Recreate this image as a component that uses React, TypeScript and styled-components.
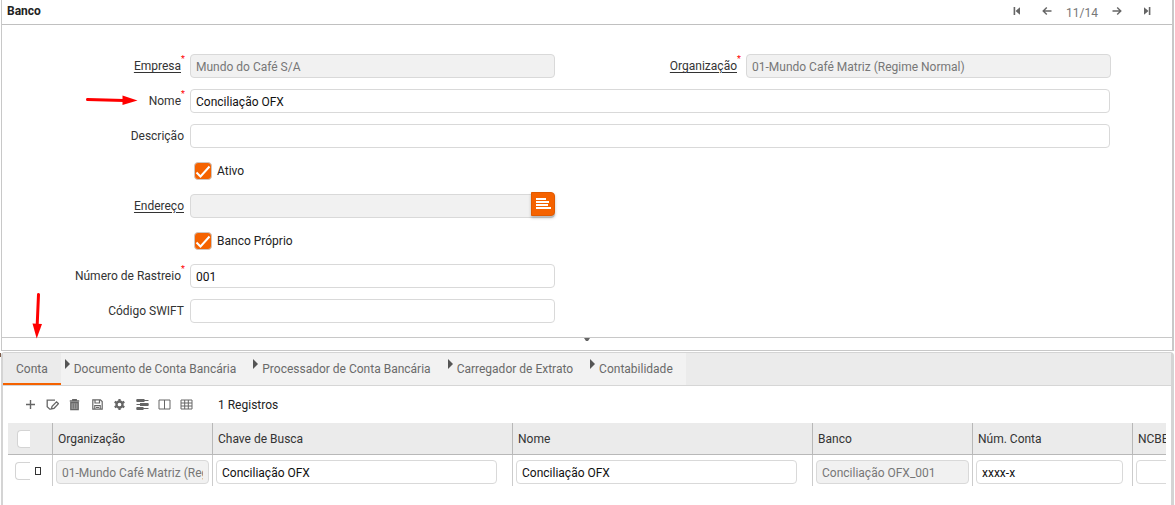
import React from 'react';
import styled, { createGlobalStyle } from 'styled-components';

const Global = createGlobalStyle`
  * { box-sizing: border-box; }
  body { margin: 0; background: #fff; }
  body, button, input { font-family: Roboto, "Open Sans", sans-serif; font-size: 12px; color: #333; }
`;

const Page = styled.div`
  position: relative;
  min-height: 100vh;
  padding: 0 1px;
  display: flex;
  flex-direction: column;
  overflow: hidden;
`;

const FormPanel = styled.section`
  border: solid #c8c8c8;
  border-width: 0 2px 1px 1px;
`;

const Header = styled.header`
  height: 25px;
  display: flex;
  align-items: center;
  justify-content: space-between;
  padding: 0 17px 3px 5px;
  border-bottom: 1px solid #c0c0c0;
`;

const Title = styled.h1`
  margin: 0;
  font-size: 12px;
  line-height: 20px;
  font-weight: 700;
  color: #222;
`;

const Pager = styled.nav`
  display: flex;
  align-items: center;
  gap: 14px;
`;

const PagerButton = styled.button`
  width: 16px;
  height: 16px;
  padding: 0;
  border: 0;
  background: none;
  color: #666;
  display: flex;
  align-items: center;
  justify-content: center;
`;

const PagerText = styled.span`
  margin: 0 -3px;
  padding-top: 5px;
  color: #777;
  line-height: 16px;
`;

const Form = styled.form`
  display: grid;
  grid-template-columns: 183px 1fr 181px 1fr;
  column-gap: 5px;
  row-gap: 11px;
  grid-auto-rows: 24px;
  align-items: center;
  padding: 29px 61px 14px 0;
`;

const Label = styled.label<{ $link?: boolean; $required?: boolean }>`
  justify-self: end;
  display: flex;
  padding-right: 1px;
  line-height: 16px;
  white-space: nowrap;
  span {
    text-decoration: ${p => (p.$link ? 'underline' : 'none')};
    text-underline-offset: 2px;
  }
  &::after {
    content: ${p => (p.$required ? '"*"' : 'none')};
    width: 3px;
    margin-top: -3px;
    color: #f00;
    font-size: 9px;
    line-height: 8px;
  }
`;

const Input = styled.input<{ $wide?: boolean; $trim?: number }>`
  grid-column: ${p => (p.$wide ? '2 / -1' : 'auto')};
  display: block;
  width: calc(100% - ${p => p.$trim ?? 0}px);
  min-width: 0;
  height: 24px;
  padding: 1px 5px 0;
  border: 1px solid #d9d9d9;
  border-radius: 4px;
  background: #fff;
  color: #111;
  outline: 0;
  &:disabled { background: #f1f1f1; color: #777; }
`;

const CheckLabel = styled.label`
  grid-column: 2 / -1;
  display: flex;
  align-items: center;
  gap: 5px;
  padding-left: 4px;
  line-height: 16px;
  color: #222;
`;

const Tick = styled.span`
  display: grid;
  width: 18px;
  height: 18px;
  > * { grid-area: 1 / 1; }
  svg { pointer-events: none; }
`;

const TickInput = styled.input`
  appearance: none;
  width: 18px;
  height: 18px;
  margin: 0;
  border: 1px solid #cfc5bf;
  border-radius: 4px;
  background: #fff;
  &:checked { background: #f56200; }
`;

const Lookup = styled.div`
  position: relative;
`;

const LookupButton = styled.button`
  position: absolute;
  top: -2px;
  right: 0;
  width: 24px;
  height: 24px;
  padding: 0;
  border: 1px solid #e05a00;
  border-radius: 0 4px 4px 0;
  background: #f56200;
  box-shadow: 0 2px 3px rgba(0, 0, 0, 0.25);
  display: flex;
  align-items: center;
  justify-content: center;
`;

const RowRest = styled.div`
  grid-column: span 2;
`;

const Splitter = styled.div`
  height: 13px;
  border: solid #c8c8c8;
  border-width: 0 2px 1px 1px;
  display: flex;
  justify-content: center;
  align-items: flex-start;
`;

const Detail = styled.section`
  flex: 1;
  margin-top: 1px;
  border: solid #d4d4d4;
  border-width: 1px 3px 0 2px;
  border-radius: 4px 4px 0 0;
`;

const Tabs = styled.div`
  height: 33px;
  display: flex;
  background: #ebebeb;
  border-bottom: 1px solid #d6d6d6;
`;

const Tab = styled.button<{ $active?: boolean }>`
  position: relative;
  height: 32px;
  padding: 0 13px;
  border: 0;
  background: ${p => (p.$active ? '#ebebeb' : '#f2f2f2')};
  box-shadow: ${p => (p.$active ? 'inset 0 -2px #f56200' : 'none')};
  color: #6a6a6a;
  white-space: nowrap;
`;

const TabArrow = styled.svg`
  position: absolute;
  left: 4px;
  top: 6px;
`;

const Toolbar = styled.div`
  display: flex;
  align-items: center;
  height: 37px;
  padding-left: 18px;
`;

const Tools = styled.div`
  display: flex;
  justify-content: space-between;
  width: 175px;
`;

const ToolButton = styled.button`
  width: 18px;
  height: 16px;
  padding: 0;
  border: 0;
  background: none;
  color: #666;
  display: flex;
  align-items: center;
  justify-content: center;
`;

const Count = styled.span`
  margin-left: 22px;
  line-height: 16px;
  color: #222;
`;

const TableWrap = styled.div`
  margin: 0 5px;
  overflow: hidden;
`;

const Table = styled.table`
  table-layout: fixed;
  width: 1284px;
  border-collapse: separate;
  border-spacing: 0;
`;

const Col = styled.col<{ $width: number }>`
  width: ${p => p.$width}px;
`;

const Th = styled.th`
  height: 32px;
  padding: 0 5px;
  background: #ebebeb;
  border-bottom: 1px solid #b8b8b8;
  border-left: 1px solid #b8b8b8;
  text-align: left;
  font-weight: 400;
  white-space: nowrap;
  &:first-child { border-left: 0; padding: 0 9px; }
`;

const Td = styled.td`
  height: 31px;
  padding: 3px 3px 0;
  border-left: 1px solid #ccc;
  &:first-child { border-left: 0; padding: 0 7px; }
`;

const RowTools = styled.div`
  display: flex;
  align-items: center;
  gap: 5px;
`;

const RowCheck = styled.input<{ $narrow?: boolean }>`
  appearance: none;
  display: block;
  width: ${p => (p.$narrow ? 13 : 15)}px;
  height: 18px;
  margin: 0;
  border: 1px solid #d4d4d4;
  border-right: 0;
  border-radius: 4px 0 0 4px;
  background: #fff;
`;

const Glyph = styled.span`
  width: 6px;
  height: 8px;
  border: 1px solid #333;
`;

const Marks = styled.svg`
  position: absolute;
  left: 0;
  top: 0;
  pointer-events: none;
`;

const Check = () => (
  <svg width="18" height="18" viewBox="0 0 18 18" fill="none" stroke="#fff" strokeWidth="2">
    <path d="M2.5 10.5 6.5 14.5 15.5 4.5" />
  </svg>
);

const toolIcons: { name: string; art: React.ReactNode }[] = [
  { name: 'Novo', art: <path d="M6.5 2v9M2 6.5h9" strokeWidth="1.4" /> },
  {
    name: 'Editar',
    art: <path d="M9 2.2H1.2v6.6l2.6 2.4h1.4M5.4 10.9l.7-2.6 4.4-4.5 2 1.9-4.5 4.6z" strokeWidth="1.3" />,
  },
  {
    name: 'Excluir',
    art: (
      <>
        <path d="M1.8 3h9.4M4.8 3V1.6h3.4V3" strokeWidth="1.4" />
        <path d="M2.8 4.6h7.4v7H2.8z" fill="#999" strokeWidth="1.3" />
        <path d="M5.3 5.5v5M7.7 5.5v5" strokeWidth=".8" />
      </>
    ),
  },
  {
    name: 'Salvar',
    art: <path d="M1.8 1.8h7.6l1.8 1.8v7.6H1.8zM4 2v3h4.5V2M3.8 11V7.5h5.4V11M5 9.3h3" strokeWidth="1.2" />,
  },
  {
    name: 'Processo',
    art: (
      <>
        <circle cx="6.5" cy="6.5" r="3" strokeWidth="2.3" />
        <path d="M6.5 1v2M6.5 10v2M1.7 3.7l1.7 1M9.6 8.3l1.7 1M1.7 9.3l1.7-1M9.6 4.7l1.7-1" strokeWidth="2.2" />
      </>
    ),
  },
  {
    name: 'Personalizar',
    art: (
      <>
        <path d="M.5 2.5h12M.5 6.5h12M.5 10.5h12" strokeWidth="1" />
        <path d="M.5 2.5h8M4 6.5h8.5M.5 10.5h7" strokeWidth="2.8" />
      </>
    ),
  },
  { name: 'Colunas', art: <path d="M1 2h11v9H1zM6.5 2v9" strokeWidth="1" /> },
  { name: 'Grade', art: <path d="M1 2h11v9H1zM1 5h11M1 8h11M4.7 2v9M8.3 2v9" strokeWidth="1" /> },
];

const pagerArt: Record<string, React.ReactNode> = {
  first: (
    <>
      <path d="M3.4 2v8" strokeWidth="1.6" />
      <path d="M9 2.2v7.6L4.5 6z" fill="currentColor" stroke="none" />
    </>
  ),
  prev: <path d="M10.5 6H2M5.8 2.4 2.2 6l3.6 3.6" />,
  next: <path d="M1.5 6H10M6.2 2.4 9.8 6 6.2 9.6" />,
  last: (
    <>
      <path d="M8.6 2v8" strokeWidth="1.6" />
      <path d="M3 2.2v7.6L7.5 6z" fill="currentColor" stroke="none" />
    </>
  ),
};

const PagerItem = ({ kind, label }: { kind: string; label: string }) => (
  <PagerButton type="button" aria-label={label}>
    <svg width="12" height="12" viewBox="0 0 12 12" fill="none" stroke="currentColor" strokeWidth="1.4">
      {pagerArt[kind]}
    </svg>
  </PagerButton>
);

const tabs = [
  'Conta',
  'Documento de Conta Bancária',
  'Processador de Conta Bancária',
  'Carregador de Extrato',
  'Contabilidade',
];

const columns = [
  { title: 'Organização', width: 160, value: '01-Mundo Café Matriz (Regime Normal)', disabled: true, trim: 0 },
  { title: 'Chave de Busca', width: 300, value: 'Conciliação OFX', disabled: false, trim: 12 },
  { title: 'Nome', width: 300, value: 'Conciliação OFX', disabled: false, trim: 12 },
  { title: 'Banco', width: 160, value: 'Conciliação OFX_001', disabled: true, trim: 0 },
  { title: 'Núm. Conta', width: 160, value: 'xxxx-x', disabled: false, trim: 6 },
  { title: 'NCBE', width: 160, value: '', disabled: false, trim: 6 },
];

export default function App() {
  return (
    <Page>
      <Global />
      <FormPanel>
        <Header>
          <Title>Banco</Title>
          <Pager aria-label="Registros">
            <PagerItem kind="first" label="Primeiro" />
            <PagerItem kind="prev" label="Anterior" />
            <PagerText>11/14</PagerText>
            <PagerItem kind="next" label="Próximo" />
            <PagerItem kind="last" label="Último" />
          </Pager>
        </Header>
        <Form>
          <Label htmlFor="empresa" $link $required><span>Empresa</span></Label>
          <Input id="empresa" defaultValue="Mundo do Café S/A" disabled />
          <Label htmlFor="organizacao" $link $required><span>Organização</span></Label>
          <Input id="organizacao" defaultValue="01-Mundo Café Matriz (Regime Normal)" disabled />

          <Label htmlFor="nome" $required><span>Nome</span></Label>
          <Input id="nome" $wide $trim={1} defaultValue="Conciliação OFX" />

          <Label htmlFor="descricao"><span>Descrição</span></Label>
          <Input id="descricao" $wide $trim={1} />

          <CheckLabel>
            <Tick><TickInput type="checkbox" defaultChecked /><Check /></Tick>
            Ativo
          </CheckLabel>

          <Label htmlFor="endereco" $link><span>Endereço</span></Label>
          <Lookup>
            <Input id="endereco" disabled />
            <LookupButton type="button" aria-label="Abrir endereço">
              <svg width="16" height="12" viewBox="0 0 16 12" fill="#fff">
                <path d="M1 0h10v2H1zM1 3h13v2H1zM1 6h12v2H1zM1 9h15v2H1z" />
              </svg>
            </LookupButton>
          </Lookup>

          <CheckLabel>
            <Tick><TickInput type="checkbox" defaultChecked /><Check /></Tick>
            Banco Próprio
          </CheckLabel>

          <Label htmlFor="rastreio" $required><span>Número de Rastreio</span></Label>
          <Input id="rastreio" defaultValue="001" />
          <RowRest />

          <Label htmlFor="swift"><span>Código SWIFT</span></Label>
          <Input id="swift" />
        </Form>
      </FormPanel>
      <Splitter>
        <svg width="8" height="4" viewBox="0 0 8 4"><path d="M1 0h6L5 3H3z" fill="#666" /></svg>
      </Splitter>
      <Detail>
        <Tabs role="tablist">
          {tabs.map((tab, i) => (
            <Tab key={tab} type="button" role="tab" aria-selected={i === 0} $active={i === 0}>
              {i > 0 && (
                <TabArrow width="5" height="10" viewBox="0 0 5 10">
                  <path d="M0 0l5 5-5 5z" fill="#555" />
                </TabArrow>
              )}
              {tab}
            </Tab>
          ))}
        </Tabs>
        <Toolbar>
          <Tools>
            {toolIcons.map(icon => (
              <ToolButton key={icon.name} type="button" aria-label={icon.name}>
                <svg width="13" height="13" viewBox="0 0 13 13" fill="none" stroke="currentColor">{icon.art}</svg>
              </ToolButton>
            ))}
          </Tools>
          <Count>1 Registros</Count>
        </Toolbar>
        <TableWrap>
          <Table>
            <colgroup>
              <Col $width={44} />
              {columns.map(c => <Col key={c.title} $width={c.width} />)}
            </colgroup>
            <thead>
              <tr>
                <Th><RowCheck type="checkbox" $narrow aria-label="Selecionar todos" /></Th>
                {columns.map(c => <Th key={c.title}>{c.title}</Th>)}
              </tr>
            </thead>
            <tbody>
              <tr>
                <Td><RowTools><RowCheck type="checkbox" aria-label="Selecionar linha" /><Glyph /></RowTools></Td>
                {columns.map(c => (
                  <Td key={c.title}>
                    <Input aria-label={c.title} defaultValue={c.value} disabled={c.disabled} $trim={c.trim} />
                  </Td>
                ))}
              </tr>
            </tbody>
          </Table>
        </TableWrap>
      </Detail>
      <Marks width="190" height="360" viewBox="0 0 190 360" fill="#f00" stroke="#f00">
        <path d="M87.5 99.5 124 100.5" strokeWidth="3" strokeLinecap="round" />
        <path d="M122.5 95.5 137.5 100.5 122.5 105z" stroke="none" />
        <path d="M38.5 294.5 37.2 325" strokeWidth="3" strokeLinecap="round" />
        <path d="M32.5 323.5 42 324 36.7 338.5z" stroke="none" />
        <path d="M0 353h1v4H0z" fill="#7a5a48" stroke="none" />
      </Marks>
    </Page>
  );
}
